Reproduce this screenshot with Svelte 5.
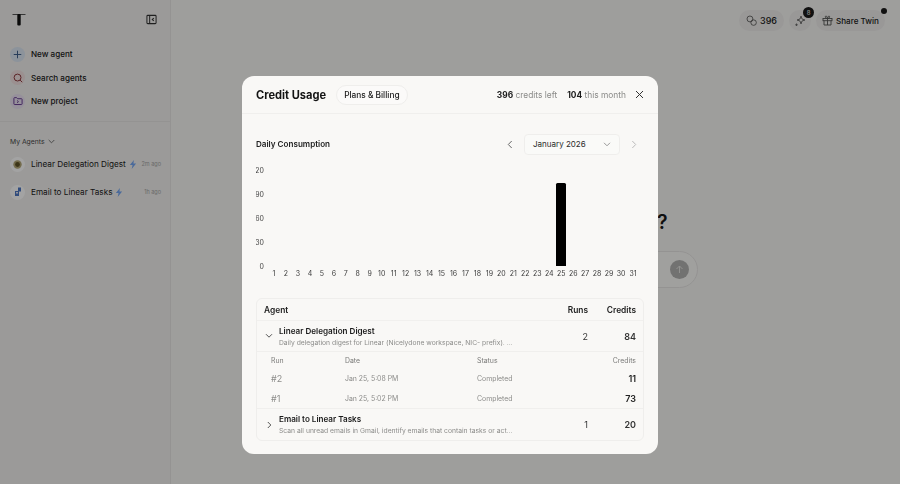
<script>
const days = Array.from({ length: 31 }, (_, i) => i + 1)
const ticks = [120, 90, 60, 30, 0]
const usage = { 25: 84 }
const maxCredits = 103
</script>

<div class="page">
  <aside class="sidebar">
    <div class="side-head">
      <svg class="logo" width="14" height="13" viewBox="0 0 14 13">
        <path d="M.5 1.500h13" stroke="#555" stroke-width="1"/>
        <rect x="5.300" y="1" width="3.400" height="11.500" rx="1" fill="#111"/>
      </svg>
      <svg class="collapse" width="11" height="11" viewBox="0 0 12 12" fill="none" stroke="#333" stroke-width="1.1">
        <rect x="1" y="1.500" width="10" height="9" rx="1"/>
        <path d="M4 1.500v9M8.500 4.500L6.800 6l1.700 1.500"/>
      </svg>
    </div>

    <nav class="side-nav">
      <div class="nav-item">
        <span class="nav-icon blue">
          <svg width="9" height="9" viewBox="0 0 10 10" stroke="#3d5e8c" stroke-width="1.1"><path d="M5 .8v8.400M.8 5h8.400"/></svg>
        </span>
        New agent
      </div>
      <div class="nav-item">
        <span class="nav-icon red">
          <svg width="10" height="10" viewBox="0 0 11 11" fill="none" stroke="#8f3b3f" stroke-width="1.100"><circle cx="5" cy="5" r="3.800"/><path d="M7.800 7.800l2.300 2.300"/></svg>
        </span>
        Search agents
      </div>
      <div class="nav-item">
        <span class="nav-icon purple">
          <svg width="10" height="10" viewBox="0 0 11 11" fill="none" stroke="#6a3f94" stroke-width="1.100"><path d="M1 2.500a.7.7 0 0 1 .7-.7h2.300l1 1.200h4.300a.7.7 0 0 1 .7.7v5a.7.7 0 0 1-.7.7H1.700a.7.7 0 0 1-.7-.7z"/><path d="M4.500 5l1.500 1.200-1.500 1.200"/></svg>
        </span>
        New project
      </div>
    </nav>

    <div class="agents">
      <div class="agents-title">
        My Agents
        <svg width="7" height="5" viewBox="0 0 7 5" fill="none" stroke="#666" stroke-width=".9"><path d="M.7 1l2.800 2.800L6.300 1"/></svg>
      </div>
      <div class="agent-row">
        <span class="avatar">
          <svg width="9" height="9" viewBox="0 0 9 9"><circle cx="4.500" cy="4.500" r="4.200" fill="#b5a878"/><circle cx="4.500" cy="4.500" r="2.400" fill="#5f5326"/></svg>
        </span>
        <span class="agent-name">Linear Delegation Digest</span>
        <svg class="bolt" width="8" height="9" viewBox="0 0 9 10"><path d="M5.500 0L1 5.500h3L3 10l5-6H5z" fill="#74a6f2"/></svg>
        <span class="ago">2m ago</span>
      </div>
      <div class="agent-row">
        <span class="avatar">
          <svg width="10" height="10" viewBox="0 0 10 10"><path d="M5 .5h3v4H5zM2 4h4v5H2z" fill="#4d78c4"/><path d="M3 5h2v1.500H3z" fill="#e3e7f0"/></svg>
        </span>
        <span class="agent-name">Email to Linear Tasks</span>
        <svg class="bolt" width="8" height="9" viewBox="0 0 9 10"><path d="M5.500 0L1 5.500h3L3 10l5-6H5z" fill="#74a6f2"/></svg>
        <span class="ago">1h ago</span>
      </div>
    </div>
  </aside>

  <main class="main">
    <header class="topbar">
      <div class="pill credits">
        <svg width="11" height="11" viewBox="0 0 12 12" fill="none" stroke="#555" stroke-width=".9"><circle cx="4.300" cy="4.300" r="3.200"/><circle cx="8.300" cy="8.300" r="3"/></svg>
        396
      </div>
      <div class="pill spark">
        <svg width="12" height="12" viewBox="0 0 12 12" fill="none" stroke="#666" stroke-width=".9"><path d="M7 1l1 3 3 1-3 1-1 3-1-3-3-1 3-1zM2.500 8.500v2.500M1.200 9.800h2.600"/></svg>
        <span class="count">8</span>
      </div>
      <div class="pill share">
        <svg width="11" height="11" viewBox="0 0 11 11" fill="none" stroke="#555" stroke-width=".9"><rect x="1" y="3.500" width="9" height="2.200"/><path d="M2 5.700v4.300h7V5.700M5.500 3.500V10M5.500 3.500C3 3.500 2.800 1 4 1s1.500 2.500 1.500 2.500S6 1 7 1s1 2.500-1.500 2.500"/></svg>
        Share Twin
        <span class="notify"></span>
      </div>
    </header>

    <div class="hero">
      <h1>What should your agent do?</h1>
      <div class="prompt">
        <span class="send">
          <svg width="9" height="9" viewBox="0 0 9 9" fill="none" stroke="#e4e4e2" stroke-width="1"><path d="M4.500 8V1M1.500 4l3-3 3 3"/></svg>
        </span>
      </div>
    </div>
  </main>

  <div class="overlay">
    <section class="modal">
      <header class="modal-head">
        <h2>Credit Usage</h2>
        <span class="billing">Plans &amp; Billing</span>
        <div class="balance">
          <span><b>396</b> credits left</span>
          <span><b>104</b> this month</span>
        </div>
        <svg class="close" width="9" height="9" viewBox="0 0 9 9" stroke="#333" stroke-width="1"><path d="M1 1l7 7M8 1L1 8"/></svg>
      </header>

      <div class="modal-body">
        <div class="chart-head">
          <h3>Daily Consumption</h3>
          <div class="month-nav">
            <svg width="6" height="9" viewBox="0 0 6 9" fill="none" stroke="#666" stroke-width="1"><path d="M4.700 1L1.300 4.500 4.700 8"/></svg>
            <div class="month">
              January 2026
              <svg width="8" height="5" viewBox="0 0 8 5" fill="none" stroke="#999" stroke-width="1"><path d="M1 .8l3 3 3-3"/></svg>
            </div>
            <svg width="6" height="9" viewBox="0 0 6 9" fill="none" stroke="#bbb" stroke-width="1"><path d="M1.300 1l3.400 3.500L1.300 8"/></svg>
          </div>
        </div>

        <div class="chart">
          <div class="y-axis">
            {#each ticks as t}
              <span>{t}</span>
            {/each}
          </div>
          <div class="plot">
            {#each days as d}
              <div class="col">
                <div class="bar-area">
                  {#if usage[d]}
                    <div class="bar" style="height: {(usage[d] / maxCredits) * 100}%"></div>
                  {/if}
                </div>
                <span class="day">{d}</span>
              </div>
            {/each}
          </div>
        </div>

        <div class="table">
          <div class="row table-head">
            <span class="grow">Agent</span>
            <span class="runs">Runs</span>
            <span class="creds">Credits</span>
          </div>
          <div class="row agent-line">
            <svg class="chev" width="8" height="6" viewBox="0 0 8 6" fill="none" stroke="#555" stroke-width="1"><path d="M1 1.200l3 3 3-3"/></svg>
            <div class="grow info">
              <strong>Linear Delegation Digest</strong>
              <small>Daily delegation digest for Linear (Nicelydone workspace, NIC- prefix). ...</small>
            </div>
            <span class="runs num">2</span>
            <span class="creds num bold">84</span>
          </div>
          <div class="runs-table">
            <div class="sub sub-head"><span>Run</span><span>Date</span><span>Status</span><span class="right">Credits</span></div>
            <div class="sub"><span class="id">#2</span><span>Jan 25, 5:08 PM</span><span>Completed</span><b class="right">11</b></div>
            <div class="sub"><span class="id">#1</span><span>Jan 25, 5:02 PM</span><span>Completed</span><b class="right">73</b></div>
          </div>
          <div class="row agent-line last">
            <svg class="chev" width="8" height="8" viewBox="0 0 8 8" fill="none" stroke="#555" stroke-width="1"><path d="M2.800 1l3 3-3 3"/></svg>
            <div class="grow info">
              <strong>Email to Linear Tasks</strong>
              <small>Scan all unread emails in Gmail, identify emails that contain tasks or act...</small>
            </div>
            <span class="runs num">1</span>
            <span class="creds num bold">20</span>
          </div>
        </div>
      </div>
    </section>
  </div>
</div>

<style>
  :global(body) {
    margin: 0;
    font-family: Inter, "Liberation Sans", sans-serif;
  }

  .page {
    position: relative;
    display: flex;
    width: 900px;
    height: 484px;
    overflow: hidden;
    background: #f8f7f5;
    color: #1a1a1a;
  }

  /* sidebar */
  .sidebar {
    width: 170px;
    flex-shrink: 0;
    background: #f2f1ef;
    border-right: 1px solid #e8e7e5;
  }
  .side-head {
    display: flex;
    justify-content: space-between;
    align-items: center;
    padding: 11px 13px 0 12px;
    height: 16px;
  }
  .side-nav {
    display: flex;
    flex-direction: column;
    gap: 3.700px;
    padding: 17px 10px 10px;
    border-bottom: 1px solid #e8e7e5;
  }
  .nav-item {
    display: flex;
    align-items: center;
    gap: 6px;
    height: 20px;
    font-size: 8.100px;
    font-weight: 500;
  }
  .nav-icon {
    width: 15px;
    height: 15px;
    border-radius: 50%;
    display: flex;
    align-items: center;
    justify-content: center;
  }
  .nav-icon.blue { background: #dbe6f2; }
  .nav-icon.red { background: #f3e1e1; }
  .nav-icon.purple { background: #ebe2f3; }

  .agents {
    padding: 15px 9px 0 10px;
  }
  .agents-title {
    display: flex;
    align-items: center;
    gap: 3px;
    font-size: 6.800px;
    line-height: 9px;
    color: #4a4a4a;
    margin-bottom: 4px;
  }
  .agent-row {
    display: flex;
    align-items: center;
    height: 28px;
    font-size: 8.200px;
    color: #222;
    white-space: nowrap;
  }
  .avatar {
    width: 15px;
    height: 15px;
    border-radius: 50%;
    background: #fff;
    display: flex;
    align-items: center;
    justify-content: center;
    margin-right: 6px;
    flex-shrink: 0;
  }
  .bolt {
    margin-left: 3px;
  }
  .ago {
    margin-left: auto;
    font-size: 5.500px;
    color: #a5a5a5;
  }

  /* main behind the modal */
  .main {
    flex: 1;
    display: flex;
    flex-direction: column;
  }
  .topbar {
    display: flex;
    justify-content: flex-end;
    align-items: center;
    gap: 5px;
    padding: 10px 15px 0 0;
  }
  .pill {
    position: relative;
    display: flex;
    align-items: center;
    gap: 3px;
    height: 21px;
    border-radius: 11px;
    background: #efeeec;
    font-size: 8.100px;
    font-weight: 500;
    padding: 0 6px;
  }
  .credits {
    font-size: 9px;
    padding: 0 7px;
  }
  .spark {
    padding: 0 5px;
  }
  .count {
    position: absolute;
    top: -3px;
    right: -3px;
    width: 11px;
    height: 11px;
    border-radius: 50%;
    background: #1b1b1b;
    color: #ddd;
    font-size: 6px;
    line-height: 11px;
    text-align: center;
  }
  .notify {
    position: absolute;
    top: -2px;
    right: -2px;
    width: 6px;
    height: 6px;
    border-radius: 50%;
    background: #1b1b1b;
  }
  .hero {
    display: flex;
    flex-direction: column;
    align-items: center;
    padding-top: 179px;
  }
  .hero h1 {
    margin: 0;
    font-size: 19.500px;
    font-weight: 600;
    line-height: 24px;
  }
  .prompt {
    box-sizing: border-box;
    width: 324px;
    height: 37px;
    margin-top: 17px;
    border-radius: 19px;
    background: #fbfaf8;
    border: 1px solid #e8e7e5;
    display: flex;
    justify-content: flex-end;
    align-items: center;
    padding-right: 8px;
  }
  .send {
    width: 19px;
    height: 19px;
    border-radius: 50%;
    background: #b3b3b1;
    display: flex;
    align-items: center;
    justify-content: center;
  }

  /* modal */
  .overlay {
    position: absolute;
    inset: 0;
    background: rgba(0, 0, 0, 0.36);
    backdrop-filter: blur(0.7px);
    display: flex;
    align-items: flex-start;
    justify-content: center;
    padding-top: 76px;
  }
  .modal {
    width: 416px;
    height: 378px;
    background: #f9f8f6;
    border-radius: 12px;
    display: flex;
    flex-direction: column;
    overflow: hidden;
  }
  .modal-head {
    display: flex;
    align-items: center;
    height: 37px;
    padding: 0 14px;
    border-bottom: 1px solid #f0efed;
  }
  .modal-head h2 {
    margin: 0;
    font-size: 11.100px;
    font-weight: 700;
    color: #141414;
  }
  .billing {
    margin-left: 10px;
    height: 18px;
    line-height: 18px;
    padding: 0 7px;
    border: 1px solid #efeeec;
    border-radius: 10px;
    background: #fbfaf9;
    font-size: 8.300px;
    font-weight: 500;
  }
  .balance {
    margin-left: auto;
    display: flex;
    gap: 10px;
    font-size: 8.400px;
    color: #8a8a88;
  }
  .balance b {
    color: #1a1a1a;
    font-weight: 700;
  }
  .close {
    margin-left: 9px;
  }
  .modal-body {
    padding: 19px 14px 0;
  }
  .chart-head {
    display: flex;
    justify-content: space-between;
    align-items: center;
    height: 22px;
  }
  .chart-head h3 {
    margin: 0;
    font-size: 8.100px;
    font-weight: 600;
    color: #222;
  }
  .month-nav {
    display: flex;
    align-items: center;
    gap: 11px;
    padding-right: 7px;
  }
  .month {
    display: flex;
    align-items: center;
    justify-content: space-between;
    width: 78px;
    height: 19px;
    padding: 0 8px;
    border: 1px solid #efeeec;
    border-radius: 4px;
    background: #fafaf8;
    font-size: 8px;
    color: #2a2a2a;
  }
  .chart {
    display: flex;
    height: 117px;
    margin-top: 9px;
  }
  .y-axis {
    width: 8px;
    height: 105px;
    margin-top: 2px;
    display: flex;
    flex-direction: column;
    justify-content: space-between;
    align-items: flex-end;
    overflow: hidden;
    font-size: 7px;
    line-height: 9px;
    color: #444;
  }
  .plot {
    flex: 1;
    display: flex;
    padding-left: 4px;
    margin-right: 5px;
  }
  .col {
    flex: 1;
    display: flex;
    flex-direction: column;
    align-items: center;
  }
  .bar-area {
    height: 102px;
    width: 100%;
    display: flex;
    flex-direction: column;
    justify-content: flex-end;
    align-items: center;
  }
  .bar {
    width: 9.500px;
    flex-shrink: 0;
    background: #000;
    border-radius: 1.500px 1.500px 0 0;
  }
  .day {
    font-size: 7px;
    line-height: 9px;
    margin-top: 3px;
    color: #3a3a3a;
  }
  .table {
    margin-top: 17px;
    border: 1px solid #efeeec;
    border-radius: 6px;
    overflow: hidden;
  }
  .row {
    display: flex;
    align-items: center;
    padding: 0 7px;
  }
  .grow {
    flex: 1;
    min-width: 0;
  }
  .table-head {
    height: 21px;
    font-size: 8.400px;
    font-weight: 600;
    border-bottom: 1px solid #f1f0ee;
    color: #222;
  }
  .runs {
    width: 40px;
    text-align: right;
    margin-right: 1px;
  }
  .creds {
    width: 47px;
    text-align: right;
  }
  .agent-line {
    height: 30px;
    border-bottom: 1px solid #f0efed;
  }
  .agent-line.last {
    height: 31px;
    border-bottom: none;
  }
  .agent-line:not(.last) .info {
    padding-top: 2px;
  }
  .chev {
    margin: 0 6px 0 1px;
  }
  .info {
    display: flex;
    flex-direction: column;
    gap: 1px;
  }
  .info strong {
    font-size: 8.100px;
    font-weight: 600;
    line-height: 11px;
    color: #1a1a1a;
  }
  .info small {
    font-size: 6.750px;
    line-height: 10px;
    color: #8c8c8a;
    white-space: nowrap;
  }
  .num {
    font-size: 9px;
    color: #333;
  }
  .bold {
    font-weight: 600;
  }
  .runs-table {
    border-bottom: 1px solid #f0efed;
  }
  .sub {
    display: grid;
    grid-template-columns: 74px 132px 1fr 60px;
    align-items: center;
    height: 19.500px;
    padding: 0 7px 0 14px;
    font-size: 6.900px;
    color: #8c8c8a;
  }
  .sub-head {
    height: 17px;
    color: #7b7b79;
  }
  .id {
    font-size: 9px;
  }
  .sub .right {
    text-align: right;
  }
  .sub b {
    font-size: 9px;
    font-weight: 600;
    color: #222;
  }
</style>
